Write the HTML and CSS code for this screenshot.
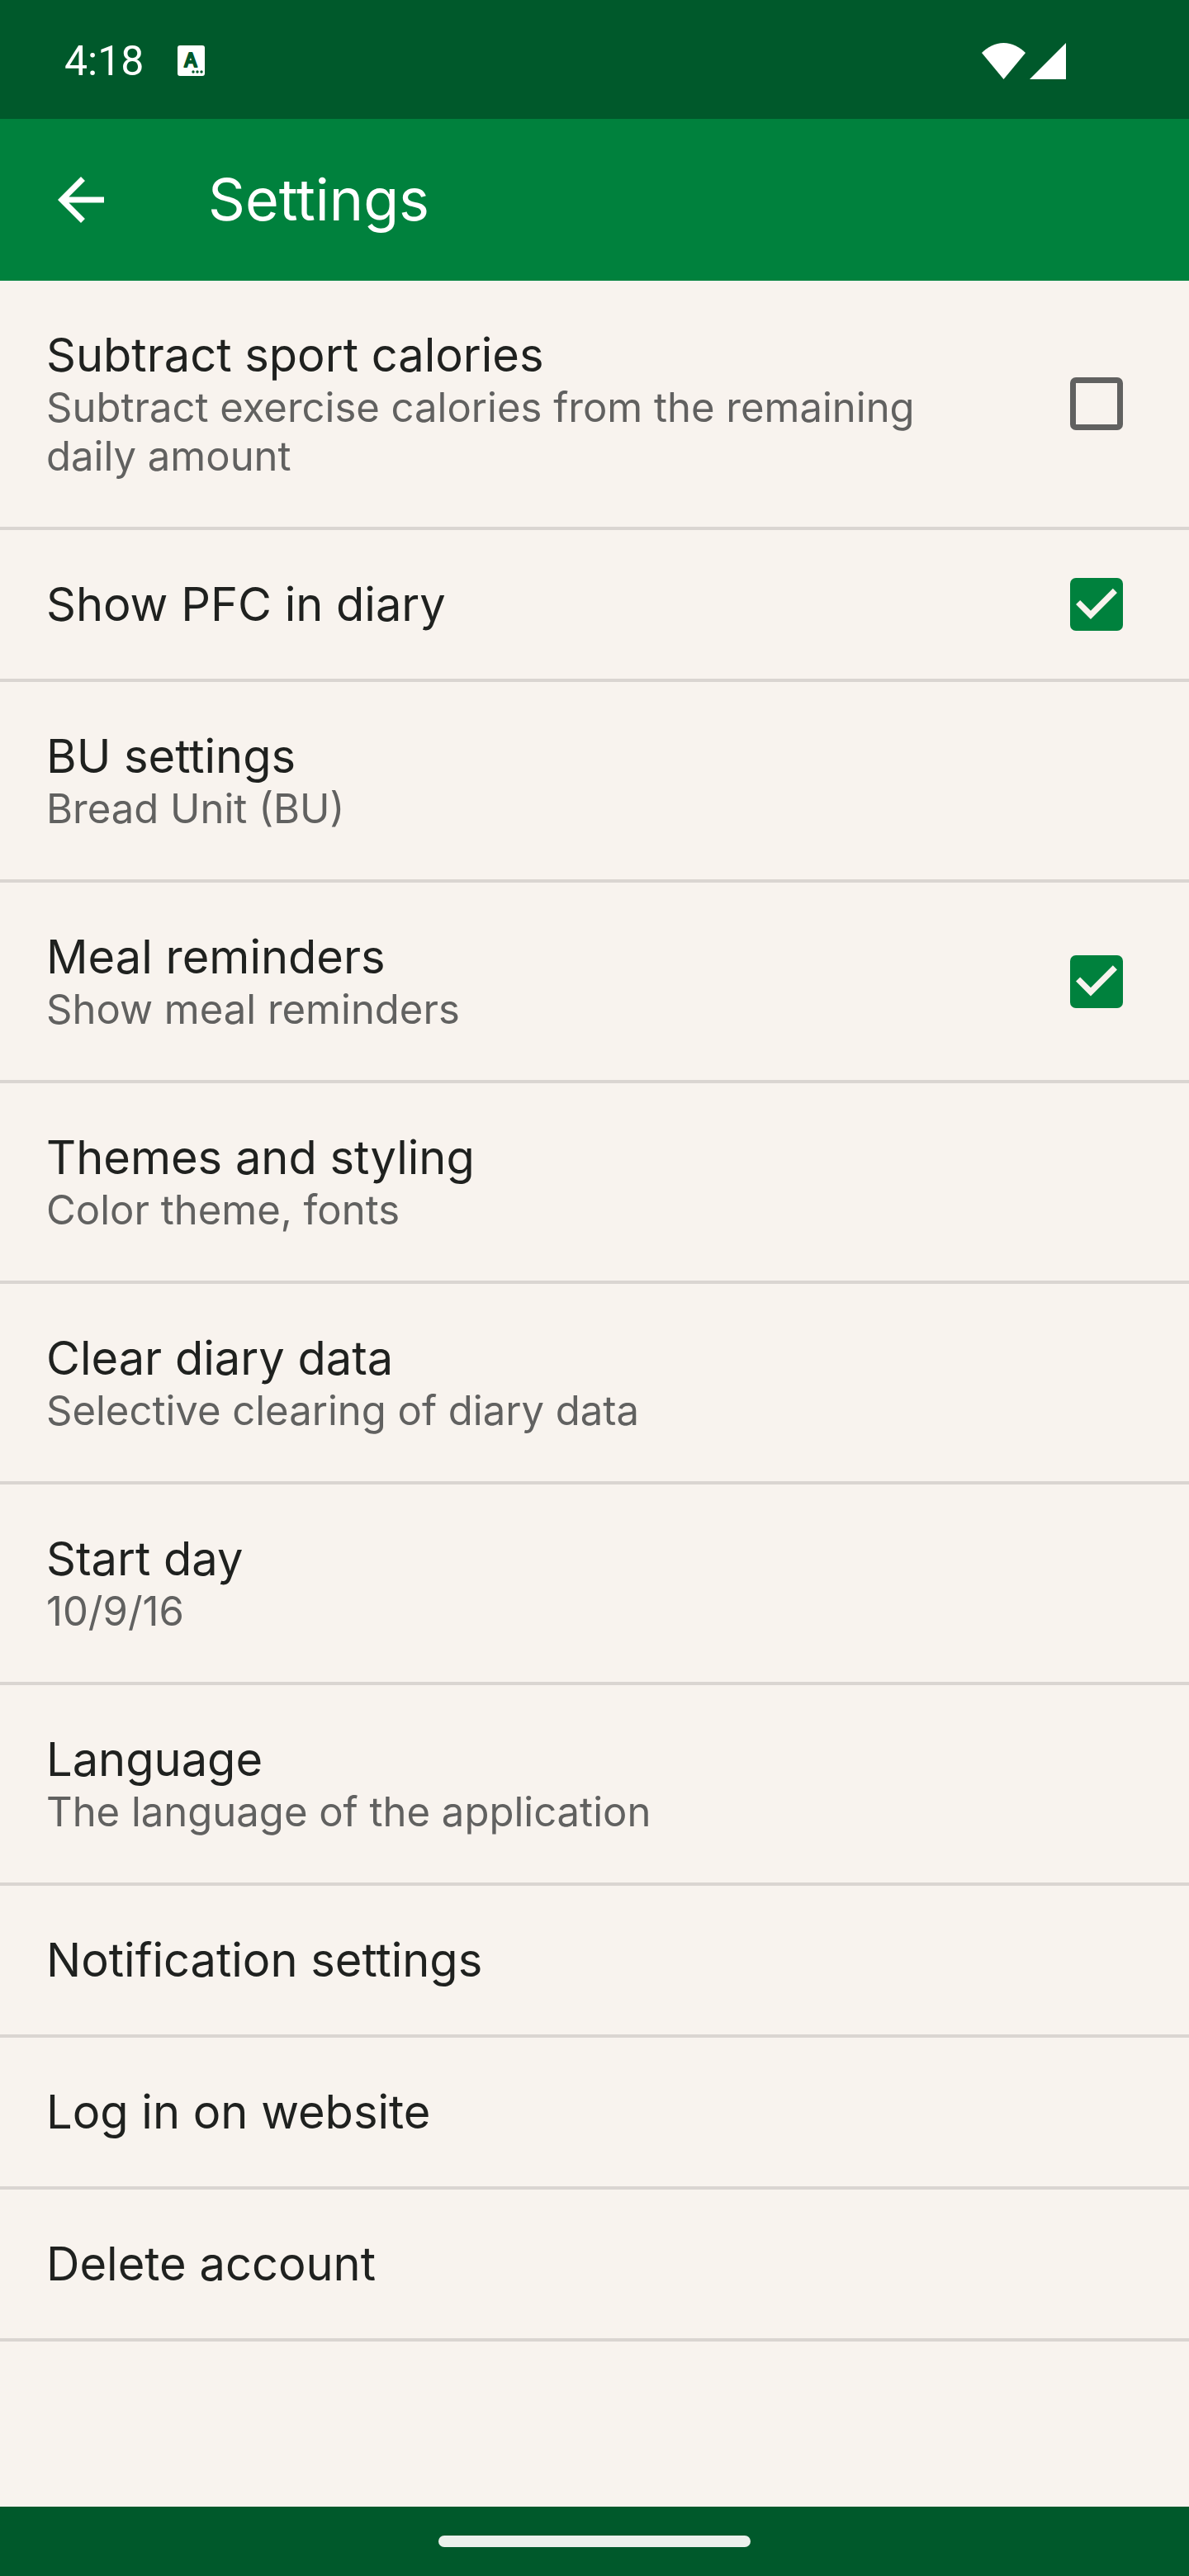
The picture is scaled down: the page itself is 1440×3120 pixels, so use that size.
FILE: index.html
```html
<!DOCTYPE html>
<html lang="en">
<head>
  <meta charset="UTF-8" />
  <meta name="viewport" content="width=device-width, initial-scale=1.0"/>
  <title>Settings</title>
  <link rel="stylesheet" href="styles.css">
</head>
<body>

  <div class="status-bar">
    <span class="clock">4:18</span>
    <svg class="app-icon" viewBox="0 0 33 37" aria-hidden="true">
      <rect class="app-icon-bg" width="33" height="37" rx="3"/>
      <text class="app-icon-letter" x="16" y="26" text-anchor="middle">A</text>
      <g class="app-icon-dots">
        <circle cx="19" cy="32" r="1.7"/>
        <circle cx="24" cy="32" r="1.7"/>
        <circle cx="29" cy="32" r="1.7"/>
      </g>
    </svg>
    <svg class="signals" viewBox="0 0 102 44" aria-hidden="true">
      <path d="M0 12C7 5 16 0 26.500 0S46 5 53 12L26.500 44z"/>
      <path d="M102 0v44H58z"/>
    </svg>
  </div>

  <header class="app-bar">
    <button type="button" class="back-btn" aria-label="Back">
      <svg viewBox="0 0 24 24"><path d="M20 11H7.830l5.590-5.590L12 4l-8 8 8 8 1.410-1.410L7.830 13H20v-2z"/></svg>
    </button>
    <h1>Settings</h1>
  </header>

  <main class="settings">
    <label class="row" for="sport">
      <span class="row-text">
        <span class="title">Subtract sport calories</span>
        <span class="summary">Subtract exercise calories from the remaining daily amount</span>
      </span>
      <input type="checkbox" id="sport" name="sport"/>
    </label>
    <label class="row" for="pfc">
      <span class="row-text">
        <span class="title">Show PFC in diary</span>
      </span>
      <input type="checkbox" id="pfc" name="pfc" checked/>
    </label>
    <a class="row" href="#bu">
      <span class="row-text">
        <span class="title">BU settings</span>
        <span class="summary">Bread Unit (BU)</span>
      </span>
    </a>
    <label class="row" for="reminders">
      <span class="row-text">
        <span class="title">Meal reminders</span>
        <span class="summary">Show meal reminders</span>
      </span>
      <input type="checkbox" id="reminders" name="reminders" checked/>
    </label>
    <a class="row" href="#themes">
      <span class="row-text">
        <span class="title">Themes and styling</span>
        <span class="summary">Color theme, fonts</span>
      </span>
    </a>
    <a class="row" href="#clear">
      <span class="row-text">
        <span class="title">Clear diary data</span>
        <span class="summary">Selective clearing of diary data</span>
      </span>
    </a>
    <a class="row" href="#start-day">
      <span class="row-text">
        <span class="title">Start day</span>
        <span class="summary">10/9/16</span>
      </span>
    </a>
    <a class="row" href="#language">
      <span class="row-text">
        <span class="title">Language</span>
        <span class="summary">The language of the application</span>
      </span>
    </a>
    <a class="row" href="#notifications">
      <span class="row-text">
        <span class="title">Notification settings</span>
      </span>
    </a>
    <a class="row" href="#login">
      <span class="row-text">
        <span class="title">Log in on website</span>
      </span>
    </a>
    <a class="row" href="#delete">
      <span class="row-text">
        <span class="title">Delete account</span>
      </span>
    </a>
  </main>

  <footer class="nav-bar">
    <div class="nav-handle"></div>
  </footer>

</body>
</html>
```
FILE: styles.css
```css
:root {
  --bg: #f8f3ee;
  --primary: #00813d;
  --primary-dark: #00592b;
  --text: #1f211f;
  --text-muted: #616160;
  --divider: #dad5d1;
}
* { box-sizing: border-box; margin:0; padding:0; }
body {
  display:flex; flex-direction:column;
  min-height:100vh;
  background: var(--bg);
  color: var(--text);
  font-family: Inter, sans-serif;
}

/* status bar */
.status-bar {
  display:flex; align-items:center;
  height:144px; padding:3px 149px 0 78px;
  background: var(--primary-dark); color:#fff;
}
.clock { font-family: Roboto, sans-serif; font-size:50px; line-height:60px; }
.app-icon { width:33px; height:37px; margin-left:41px; }
.app-icon-bg { fill:#fff; }
.app-icon-letter {
  font-size:23px; font-weight:500;
  fill: var(--primary-dark); stroke: var(--primary-dark);
  stroke-width:2; stroke-linejoin:round;
}
.app-icon-dots { fill: var(--primary-dark); }
.signals { width:102px; height:44px; margin-left:auto; fill:#fff; }

/* app bar */
.app-bar {
  display:flex; align-items:center; gap:112px;
  height:196px; padding:0 56px;
  background: var(--primary); color:#fff;
}
.back-btn { width:84px; height:84px; border:none; background:none; cursor:pointer; }
.back-btn svg { display:block; width:100%; fill:#fff; }
h1 { font-size:70px; font-weight:400; line-height:84px; }

/* settings list */
.settings { flex:1; }
.row {
  display:flex; align-items:center; gap:84px;
  padding:56px 80px 56px 56px;
  border-bottom:4px solid var(--divider);
  color:inherit; text-decoration:none; cursor:pointer;
}
.row-text { flex:1; }
.title { display:block; font-size:56px; line-height:68px; }
.summary { display:block; font-size:49px; line-height:59px; color: var(--text-muted); }

.row input {
  appearance:none;
  width:64px; height:64px; border:7px solid var(--text-muted); border-radius:7px;
  cursor:pointer;
}
.row input:checked { border:none; background: var(--primary); }
.row input:checked::before {
  content:""; display:block; width:100%; height:100%;
  background: var(--bg);
  clip-path: polygon(11% 50%, 19% 42%, 39% 62%, 81% 20%, 89% 28%, 39% 78%);
}

/* gesture bar */
.nav-bar {
  display:flex; align-items:center; justify-content:center;
  height:84px; background: var(--primary-dark);
}
.nav-handle { width:378px; height:14px; border-radius:7px; background:#ebf1ec; }
```
